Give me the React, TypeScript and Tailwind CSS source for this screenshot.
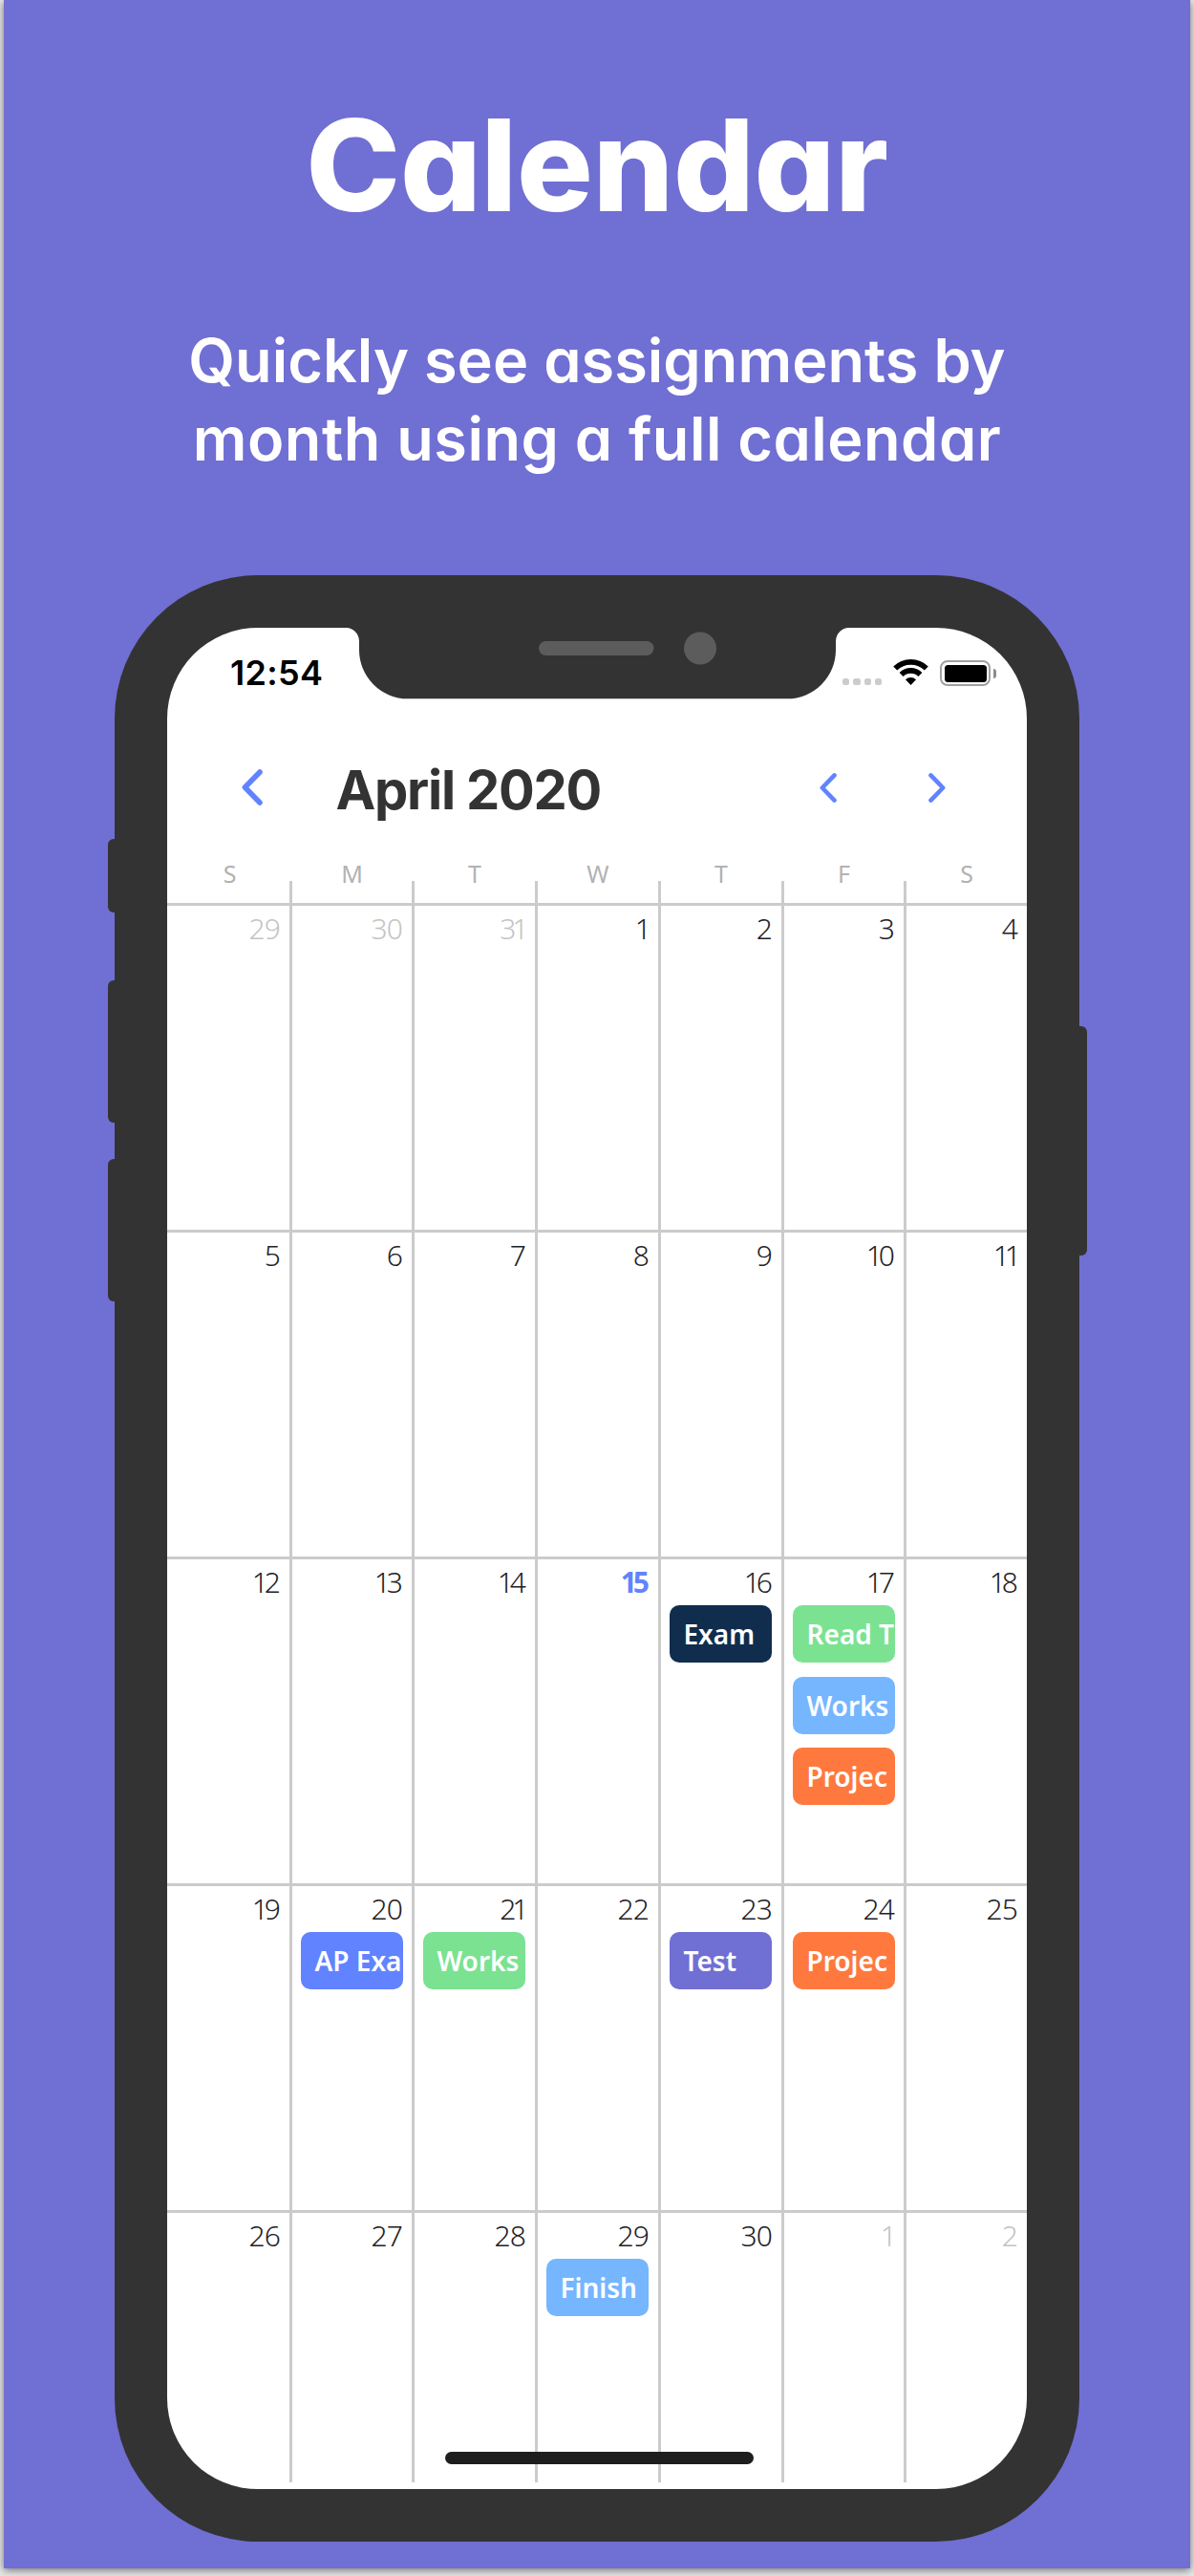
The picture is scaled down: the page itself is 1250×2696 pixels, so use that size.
type Day = { n: number; muted?: boolean; today?: boolean; events?: [string, string][] };

const NAVY = "bg-[#112d4e]";
const GREEN = "bg-[#7be292]";
const SKY = "bg-[#75b6ff]";
const ORANGE = "bg-[#ff793f]";
const BLUE = "bg-[#6283ff]";
const VIOLET = "bg-[#706fd3]";

const WEEKDAYS = ["S", "M", "T", "W", "T", "F", "S"];

const WEEKS: Day[][] = [
  [{ n: 29, muted: true }, { n: 30, muted: true }, { n: 31, muted: true }, { n: 1 }, { n: 2 }, { n: 3 }, { n: 4 }],
  [{ n: 5 }, { n: 6 }, { n: 7 }, { n: 8 }, { n: 9 }, { n: 10 }, { n: 11 }],
  [
    { n: 12 },
    { n: 13 },
    { n: 14 },
    { n: 15, today: true },
    { n: 16, events: [["Exam", NAVY]] },
    { n: 17, events: [["Read T", GREEN], ["Works", SKY], ["Projec", ORANGE]] },
    { n: 18 },
  ],
  [
    { n: 19 },
    { n: 20, events: [["AP Exa", BLUE]] },
    { n: 21, events: [["Works", GREEN]] },
    { n: 22 },
    { n: 23, events: [["Test", VIOLET]] },
    { n: 24, events: [["Projec", ORANGE]] },
    { n: 25 },
  ],
  [
    { n: 26 },
    { n: 27 },
    { n: 28 },
    { n: 29, events: [["Finish", SKY]] },
    { n: 30 },
    { n: 1, muted: true },
    { n: 2, muted: true },
  ],
];

const COLS = "grid grid-cols-[131px_128px_129px_129px_129px_128px_126px]";
const ROW_HEIGHTS = ["h-[342px]", "h-[342px]", "h-[342px]", "h-[342px]", "h-[285px]"];

function Chevron({ className, right }: { className: string; right?: boolean }) {
  return (
    <svg className={className} viewBox="0 0 22 38" fill="none" stroke="#6283ff" strokeWidth="5.6" strokeLinecap="round" strokeLinejoin="round">
      <path d={right ? "M3 3L18.6 19L3 35" : "M19 3L3.4 19L19 35"} />
    </svg>
  );
}

function StatusBar() {
  return (
    <div className="flex h-[74px] items-start">
      <div className="ml-[66px] mt-[25px] w-[110px] whitespace-nowrap text-[36px] leading-[44px] font-semibold tracking-[0.3px] text-black">12:54</div>
      <div className="ml-[531px] mt-[52.5px] flex gap-[4px]">
        {[0, 1, 2, 3].map((i) => (
          <span key={i} className="h-[7.5px] w-[7.3px] rounded-[2.5px] bg-[#cccccc]" />
        ))}
      </div>
      <svg className="ml-[12px] mt-[33px] h-[27px] w-[37px]" viewBox="0 0 37 27" fill="none" stroke="#000" strokeWidth="5.6">
        <path d="M2.2 9.6A23 23 0 0 1 34.8 9.6" />
        <path d="M8.6 16A14 14 0 0 1 28.4 16" />
        <path d="M18.5 27L13 21.2A7.8 7.8 0 0 1 24 21.2Z" fill="#000" stroke="none" />
      </svg>
      <div className="ml-[12px] mt-[34px] h-[27px] w-[53px] rounded-[8px] border-2 border-[#a0a0a0] p-[2.5px]">
        <div className="h-full w-full rounded-[3.5px] bg-black" />
      </div>
      <div className="ml-[2.5px] mt-[42.5px] h-[10px] w-[3.5px] rounded-r-full bg-[#8c8c8c]" />
    </div>
  );
}

/* The digit 1 is set tighter than the others, with padding making up for the trailing tracking. */
function numberSpacing(n: number) {
  if (n === 11) return "tracking-[-5px] pr-[11px]";
  if (n === 1) return "tracking-[-0.9px] pr-[8px]";
  if (n % 10 === 1) return "tracking-[-4px] pr-[10.5px]";
  if (n >= 10 && n < 20) return "tracking-[-4px] pr-[13px]";
  return "tracking-[-0.9px] pr-[10px]";
}

function DayCell({ day, last }: { day: Day; last: boolean }) {
  const tone = day.muted ? "text-[#c4c4c4] font-light" : day.today ? "text-[#6283ff] font-bold" : "text-[#1f2225] font-light";
  return (
    <div className={"flex flex-col overflow-hidden " + (last ? "" : "border-r-[3px] border-[#cbcbcb]")}>
      <div className={"mt-[4px] h-[40px] text-right text-[30px] leading-[39px] " + numberSpacing(day.n) + " " + tone}>{day.n}</div>
      <div className="mt-[4px] ml-[9px] flex flex-col gap-[14.5px]">
        {day.events?.map(([label, color]) => (
          <div key={label} className={"h-[60px] w-[107px] overflow-hidden whitespace-nowrap rounded-[10px] pl-[14.5px] text-[28px] leading-[61px] font-semibold text-white " + color}>
            {label}
          </div>
        ))}
      </div>
    </div>
  );
}

function Calendar() {
  return (
    <div className="font-['Noto_Sans','Open_Sans',sans-serif]">
      <div className={COLS}>
        {WEEKDAYS.map((d, i) => (
          <div key={i} className="flex h-[45px]">
            <span className={"flex-1 text-center text-[25px] leading-[28px] text-[#b2b2b2] " + (i === 0 ? "pl-[3px]" : "pl-0")}>{d}</span>
            {i < 6 && <span className="mt-[22px] h-[23px] w-[3px] bg-[#cbcbcb]" />}
          </div>
        ))}
      </div>
      {WEEKS.map((week, i) => (
        <div key={i} className={COLS + " border-t-[3px] border-[#cbcbcb] " + ROW_HEIGHTS[i]}>
          {week.map((day, j) => (
            <DayCell key={j} day={day} last={j === 6} />
          ))}
        </div>
      ))}
    </div>
  );
}

function Phone() {
  return (
    <div className="relative mt-[64px] ml-[116px] h-[2058px] w-[1010px] rounded-[150px] bg-[#333333]">
      <span className="absolute top-[276px] -left-[7px] h-[77px] w-[14px] rounded-[6px] bg-[#333333]" />
      <span className="absolute top-[424px] -left-[7px] h-[149px] w-[14px] rounded-[6px] bg-[#333333]" />
      <span className="absolute top-[611px] -left-[7px] h-[149px] w-[14px] rounded-[6px] bg-[#333333]" />
      <span className="absolute top-[472px] -right-[7.5px] h-[240px] w-[14px] rounded-[6px] bg-[#333333]" />

      <div className="px-[55px] pt-[55px]">
        <div className="relative h-[1948px] overflow-hidden rounded-[95px] bg-white font-['Inter',sans-serif]">
          <svg className="absolute -top-px left-[186px] h-[76px] w-[529px]" viewBox="0 0 529 76">
            <path d="M0 0H529V1A14 14 0 0 0 514 15V24A51 51 0 0 1 463 75.3H66A51 51 0 0 1 15 24V15A14 14 0 0 0 0 1Z" fill="#333333" />
            <rect x="203" y="15" width="120.5" height="15" rx="7.5" fill="#5c5c5c" />
            <circle cx="372" cy="22.5" r="17" fill="#5c5c5c" />
          </svg>
          <StatusBar />
          <div className="flex h-[169px] items-start">
            <Chevron className="mt-[74px] ml-[78px] h-[38px] w-[22px]" />
            <h2 className="mt-[64px] ml-[76.5px] w-[490px] whitespace-nowrap text-[56px] leading-[64px] font-bold tracking-[-1.25px] text-[#333333]">April 2020</h2>
            <Chevron className="mt-[78px] ml-[16.5px] h-[31px] w-[18px]" />
            <Chevron right className="mt-[78px] ml-[96px] h-[31px] w-[18px]" />
          </div>
          <Calendar />
          <div className="absolute top-[1909px] left-[291px] h-[13px] w-[322.5px] rounded-full bg-[#1e1e1e]" />
        </div>
      </div>
    </div>
  );
}

export default function App() {
  return (
    <div className="h-[2696px] w-[1250px] overflow-hidden bg-[#e6e6e6]">
      <div className="mx-[4px] flex h-[2687.5px] flex-col bg-[#706fd3] shadow-[0_2px_8px_rgba(0,0,0,0.5)]">
        <header className="h-[538px] text-center font-['Inter',sans-serif] text-white [font-feature-settings:'cv11']">
          <h1 className="pt-[93px] text-[133px] leading-[160px] font-extrabold tracking-[-0.2px]">Calendar</h1>
          <p className="mt-[82.5px] text-[63px] leading-[82px] font-semibold">
            <span className="tracking-[0.05px]">Quickly see assignments by</span>
            <br />
            <span className="tracking-[0.5px]">month using a full calendar</span>
          </p>
        </header>
        <Phone />
      </div>
    </div>
  );
}
